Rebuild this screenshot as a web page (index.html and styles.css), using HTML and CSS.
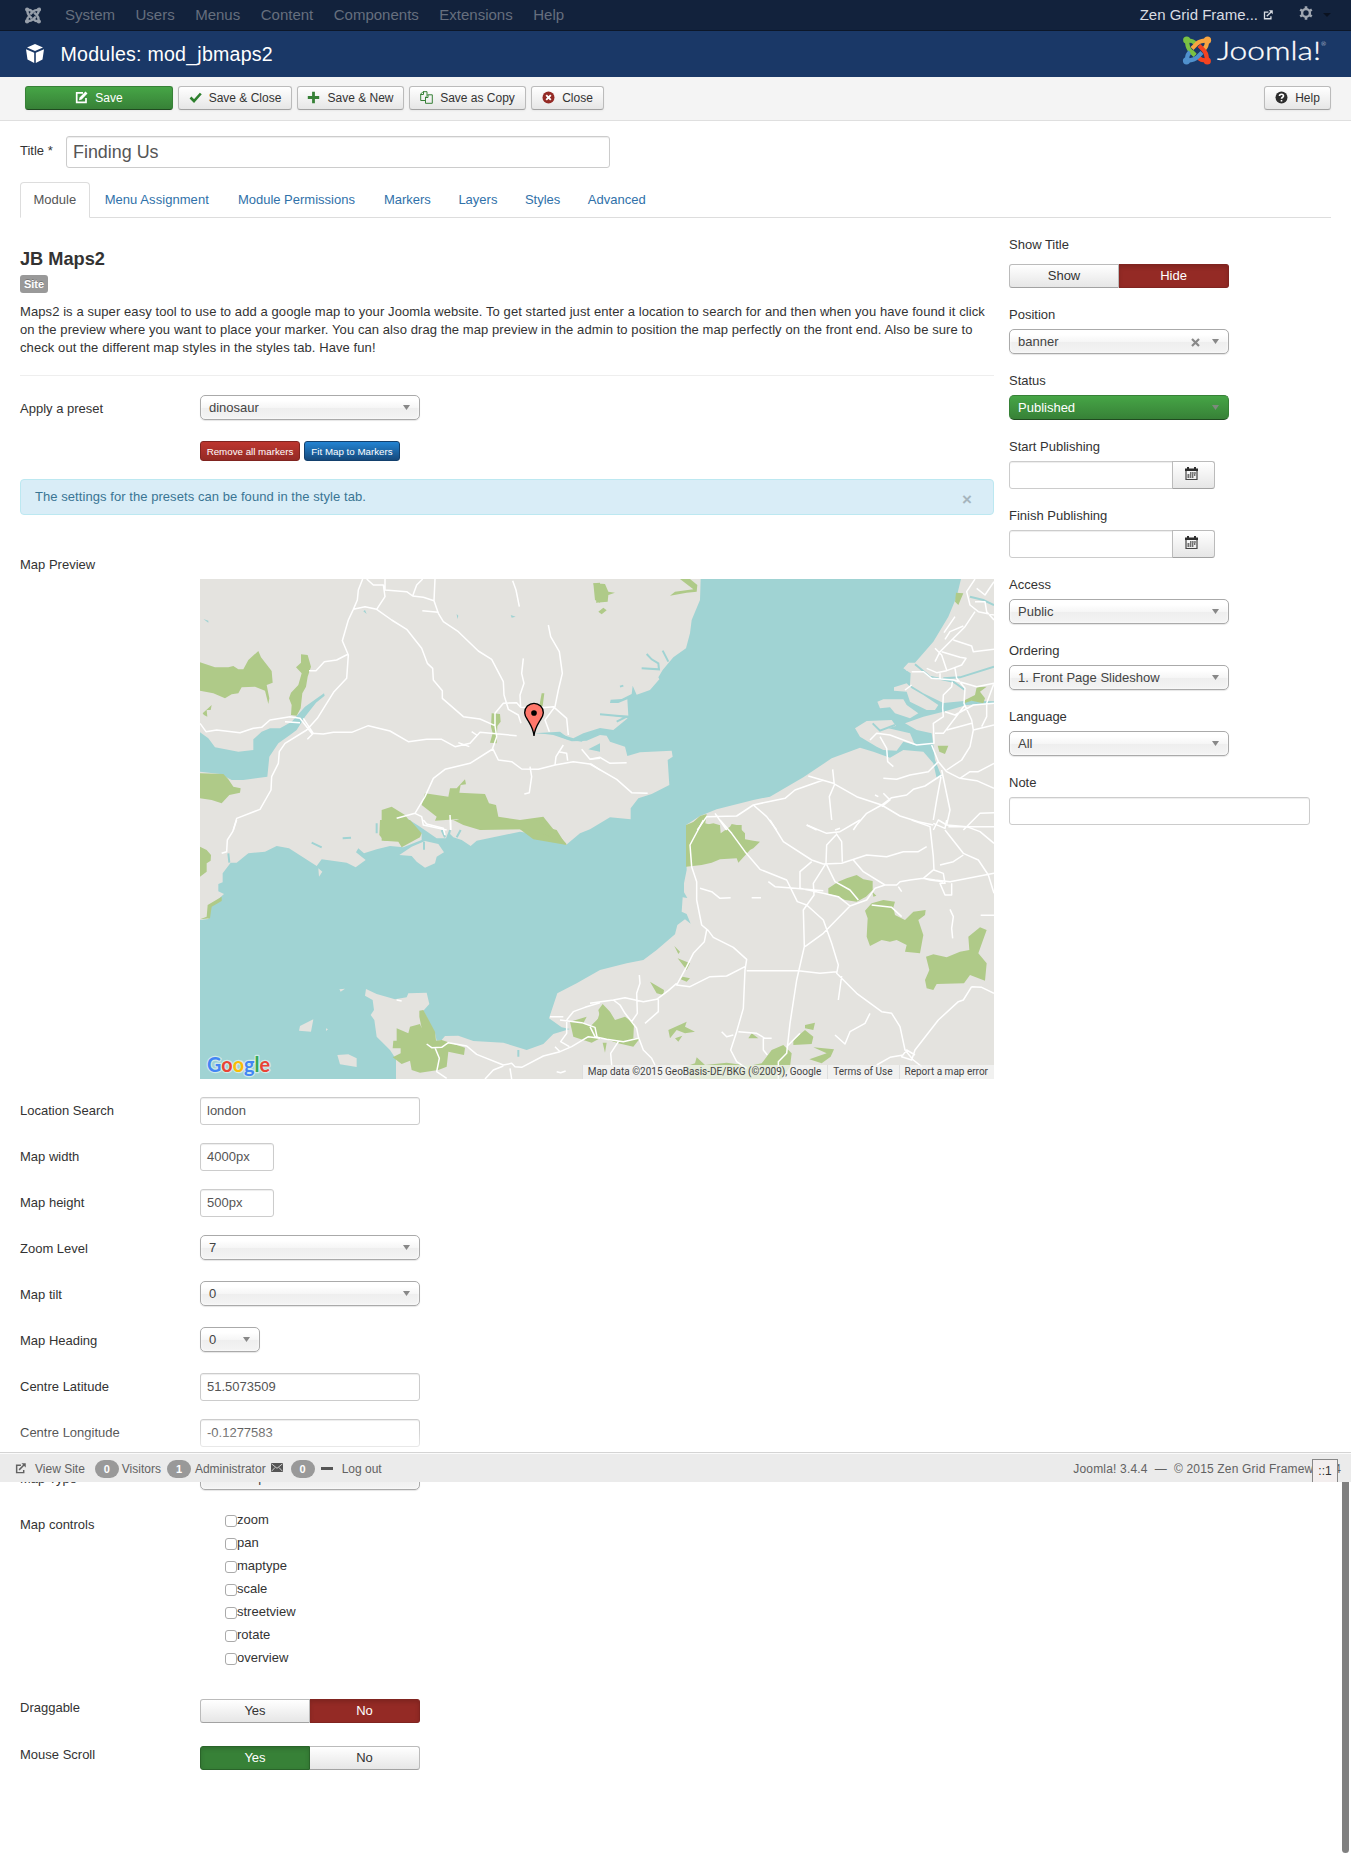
FILE: index.html
```html
<!DOCTYPE html>
<html lang="en">
<head>
<meta charset="utf-8">
<title>Modules: mod_jbmaps2</title>
<link rel="stylesheet" href="styles.css">
</head>
<body>
<svg class="defs" width="0" height="0" aria-hidden="true">
  <defs>
    <g id="arm" fill="none" stroke="currentColor" stroke-width="4.2"><circle cx="3.7" cy="4" r="3.6" fill="currentColor" stroke="none"/><path d="M4 5C4.5 10 4 11.5 7.5 15L12 19.5M5 4.5C9 4.5 11 5.500 12.500 7.500"/></g>
    <g id="ext" fill="none" stroke="currentColor" stroke-width="1.600"><path d="M6.500 2.500H1.800V10.500H9.500V7.500M4.500 7.500L10 2"/><path d="M7 0.300H11.700V5z" fill="currentColor" stroke="none"/></g>
    <g id="cal"><path d="M0 1.500H2V0H4V1.500H9V0H11V1.500H13V4H0z" fill="#2d2d2d"/><path d="M1 4V12.500H12V4" fill="none" stroke="#444" stroke-width="1.200"/><path d="M5 6h6M2.500 8h8.500M2.500 10h6.500" stroke="#444" stroke-width="1.400" stroke-dasharray="1.500 .6"/></g>
  </defs>
</svg>
<nav class="navbar">
  <svg class="nav-mark" viewBox="0 0 28 29"><use href="#arm"/><use href="#arm" transform="rotate(90 14 14.500)"/><use href="#arm" transform="rotate(180 14 14.500)"/><use href="#arm" transform="rotate(270 14 14.500)"/></svg>
  <ul class="menu"><li>System</li><li>Users</li><li>Menus</li><li>Content</li><li>Components</li><li>Extensions</li><li>Help</li></ul>
  <div class="nav-right"><span>Zen Grid Frame...</span><svg class="nav-ext" width="10" height="10" viewBox="0 0 12 12"><use href="#ext"/></svg>
    <svg class="gear" width="14" height="14" viewBox="0 0 14 14"><circle cx="7" cy="7" r="3.900" fill="none" stroke="#a0a7b1" stroke-width="2.400"/><path d="M7 .3V3M7 11v2.700M1.200 3.600l2.400 1.400M10.400 9l2.400 1.400M1.200 10.400L3.600 9M10.400 5l2.400-1.400" stroke="#a0a7b1" stroke-width="2.600"/></svg>
    <i class="caret"></i></div>
</nav>
<header class="header">
  <svg class="cube" width="18" height="19" viewBox="0 0 18 19"><path fill="#fff" d="M9 0L17 3.600 9 7 1 3.600zM0 5.200L8.200 8.700V19L1.500 15.500zM18 5.200L9.800 8.700V19L16.500 15.500z"/></svg>
  <h1>Modules: mod_jbmaps2</h1>
  <svg class="brand" width="145" height="34" viewBox="0 0 145 34"><g style="color:#7ac143"><use href="#arm"/></g><g style="color:#f9a541"><use href="#arm" transform="rotate(90 14 14.500)"/></g><g style="color:#f44321"><use href="#arm" transform="rotate(180 14 14.500)"/></g><g style="color:#5091cd"><use href="#arm" transform="rotate(270 14 14.500)"/></g><path d="M8.500 15.500L12 19" stroke="#7ac143" stroke-width="4.200"/><text x="34" y="24" textLength="104" lengthAdjust="spacingAndGlyphs">Joomla!</text><text class="reg" x="138" y="10">®</text></svg>
</header>
<div class="toolbar">
  <button class="btn save"><svg width="13" height="13" viewBox="0 0 13 13"><path d="M8 1.900H1.700V11.400H11V7" fill="none" stroke="#fff" stroke-width="1.700"/><path d="M4 9.300L4.600 6.500 10.500.5 12.500 2.500 6.700 8.500z" fill="#fff"/></svg>Save</button>
  <button class="btn w2"><svg width="13" height="13" viewBox="0 0 13 13"><path d="M1.500 6.500L5 10 11.800 2.500" fill="none" stroke="#2d7f2d" stroke-width="2.600"/></svg>Save &amp; Close</button>
  <button class="btn w3"><svg width="13" height="13" viewBox="0 0 13 13"><path d="M6.500 .8V12.200M.8 6.500H12.200" stroke="#378137" stroke-width="2.800"/></svg>Save &amp; New</button>
  <button class="btn w4"><svg width="13" height="13" viewBox="0 0 13 13"><path d="M5 9.500H.7V3L3 .7H7V4M3.500 .7V3.500H.7M5.500 6L7.800 3.800H12.300V12.300H5.500zM8 4V6.500H5.500" fill="none" stroke="#378137" stroke-width="1"/></svg>Save as Copy</button>
  <button class="btn w5"><svg width="13" height="13" viewBox="0 0 13 13"><circle cx="6.500" cy="6.500" r="6" fill="#942a25"/><path d="M4.200 4.200L8.800 8.800M8.800 4.200L4.200 8.800" stroke="#fff" stroke-width="1.900"/></svg>Close</button>
  <button class="btn help"><svg width="13" height="13" viewBox="0 0 13 13"><circle cx="6.500" cy="6.500" r="6" fill="#2d2d2d"/><path d="M4.500 5C4.500 2.700 8.500 2.700 8.500 5C8.500 6.300 6.500 6.200 6.500 7.800M6.500 9V10.600" fill="none" stroke="#fff" stroke-width="1.600"/></svg>Help</button>
</div>
<main>
  <div class="title-row"><label>Title *</label><div class="input title">Finding Us</div></div>
  <ul class="tabs"><li class="active">Module</li><li>Menu Assignment</li><li>Module Permissions</li><li>Markers</li><li>Layers</li><li>Styles</li><li>Advanced</li></ul>
  <div class="columns">
    <section class="left">
      <h3>JB Maps2</h3>
      <span class="label-site">Site</span>
      <p class="desc">Maps2 is a super easy tool to use to add a google map to your Joomla website. To get started just enter a location to search for and then when you have found it click<br>on the preview where you want to place your marker. You can also drag the map preview in the admin to position the map perfectly on the front end. Also be sure to<br>check out the different map styles in the styles tab. Have fun!</p>
      <hr>
      <div class="row"><label>Apply a preset</label><div class="select">dinosaur</div></div>
      <div class="minis"><button class="mini red">Remove all markers</button><button class="mini blue">Fit Map to Markers</button></div>
      <div class="alert"><span>The settings for the presets can be found in the style tab.</span><b>×</b></div>
      <div class="map-label">Map Preview</div>
      <div class="map">
        <svg class="map-art" viewBox="0 0 2382 1500" width="794" height="500">
          <rect width="2382" height="1500" fill="#e4e3df"/>
          <g class="water">
            <path d="M1502 0L1500 63 1475 123 1470 163 1458 208 1420 235 1388 273 1375 295 1378 301 1350 333 1310 347 1298 320 1295 345 1265 360 1232 362 1230 372 1255 372 1282 361 1285 410 1230 409 1283 418 1240 453 1200 447 1150 463 1120 478 1070 462 1010 462 1060 468 1115 487 1160 485 1200 468 1220 470 1230 488 1275 503 1282 531 1320 520 1415 515 1418 533 1403 543 1408 618 1355 645 1315 658 1292 688 1292 721 1230 715 1170 751 1140 763 1098 798 1050 773 960 758 830 785 812 801 785 783 760 775 745 760 738 778 710 778 660 743 620 718 665 763 665 783 610 805 570 801 530 811 492 823 475 808 468 820 497 843 467 865 440 851 365 841 350 861 267 808 230 801 195 818 145 823 110 851 92 851 68 883 68 910 55 915 55 937 72 945 30 983 25 1020 0 1023V1500H588L588 1441 570 1413 530 1373 523 1323 512 1308 522 1293 518 1263 495 1250 498 1230 530 1245 585 1261 620 1255 625 1243 680 1241 688 1275 670 1295 705 1363 710 1385 725 1383 735 1371 775 1370 820 1386 910 1391 980 1413 1030 1395 1060 1365 1110 1350 1085 1345 1047 1318 1072 1243 1130 1213 1200 1173 1280 1153 1330 1143 1370 1113 1425 1066 1432 1038 1455 1021 1472 1034 1460 1005 1445 998 1448 955 1462 957 1452 940 1452 913 1460 873 1458 738 1500 711 1550 691 1660 663 1710 653 1810 595 1895 538 1980 506 2020 518 2070 536 2110 513 2170 518 2200 553 2210 598 2225 593 2205 543 2200 498 2195 463 2150 453 2115 433 2170 413 2230 398 2300 378 2382 373V367L2300 365 2230 372 2170 343 2130 318 2132 283 2110 268 2125 251 2145 251 2200 188 2245 113 2270 53 2283 0z"/>
            <g transform="translate(-30 -27)"><path d="M30 487L55 505 75 532 145 545 190 540 190 508 215 485 240 475 270 475 305 455 345 410 385 382 402 370 404 377 378 398 345 440 320 480 300 495 265 520 238 560 232 620 160 630 125 630 90 612 30 605zM1030 490L1110 485 1140 508 1175 508 1190 492 1230 482V490L1195 500 1175 515 1130 508 1095 492zM1195 538L1230 520V545zM525 120l5 12-10-8zM40 147l15 5v6zM800 132l5 5-3 10zM962 135l15 5-12 3z"/></g>
          </g>
          <g transform="translate(1170 -27)">
            <path class="land" d="M795 475L830 453 905 450 918 468 895 475 960 490 975 525 940 515 920 542 880 540 860 530 840 518 810 500zM862 395L880 388 940 388 950 405 985 430 960 445 915 430 900 412 870 415zM912 352L950 340 965 355 1000 375 1045 405 1035 420 1010 420 960 395 950 365 912 362zM950 285L970 290 965 300 948 302z"/>
            <path class="stream" d="M975 283L1020 320 1090 335 1125 360M1060 325L1110 322 1212 290M1140 80L1180 90 1212 105M170 252L185 268 205 280 207 298 155 295M218 242L235 275M1010 490L1020 520M848 460L870 482 915 465M0 487L40 490M90 350l10-3M30 433L110 440 80 455"/>
          </g>
          <g transform="translate(-30 723)">
            <path class="land" d="M628 105L665 80 705 63 745 72 762 97 740 110 735 130 705 143 680 125 665 108zM385 145L397 155 387 170zM327 632L330 618 370 598 363 635zM442 705L475 703 500 715 500 741 450 733zM448 508L465 506 452 515zM408 625l6 3-6 5z"/>
            <path class="stream" d="M115 100L118 128M365 68L395 82M560 10v30M652 0L700 40M755 30L765 52M780 30L775 52M812 30L800 52M458 55l25-2M702 65v24M985 690v20"/>
          </g>
          <g class="green">
            <g transform="translate(-30 -27)"><path d="M30 277L75 292 115 292 130 288 145 298 160 298 175 270 205 243 213 262 245 303 248 338 230 345 238 385 235 402 225 362 195 350 155 352 145 370 125 373 105 385 70 370 30 362zM333 253L353 255 363 290 353 320 348 350 337 370 332 415 320 437 303 435 305 405 297 385 303 368 325 345 335 310 318 292 333 278zM38 430L65 405 62 420 50 420 52 440 42 435zM30 610L100 612 115 628 130 650 152 655 150 668 118 675 95 700 65 690 30 685zM905 430L930 432 932 455 922 468 920 520 900 518 908 490 903 470zM1055 370h8l-5 38h-10zM1210 40L1230 38V98L1215 90zM695 705L705 670 775 680 780 655 800 655 825 628 828 643 812 645 808 668 885 672 897 700 918 705 925 740 990 750 1060 740 1090 778 1128 820 1130 825 1030 808 980 770 880 770 800 748 735 752 740 740zM575 720L605 710 645 735 690 795 650 812 575 812z"/></g>
            <g transform="translate(1170 -27)"><path d="M10 40L45 42 55 65 75 68 55 75 53 95 18 98 22 75zM25 125l15-12 10 8-15 12zM270 27H300L322 45 320 65 290 68 240 77 255 65 310 58zM1098 68L1120 70 1105 105 1095 95zM1125 390L1155 375 1160 352 1190 350 1170 365 1185 385 1180 400 1145 392 1122 400zM1043 527H1075L1065 552 1048 545zM288 765L300 765 330 738 350 732 345 765 370 760 388 765 385 800 288 800zM425 765h30v25h-35z"/></g>
            <g transform="translate(-30 723)"><path d="M30 80L50 90 63 105 62 122 50 130 50 155 30 170zM95 230V243L65 260 60 295 30 298 50 290 53 255zM570 0H660L695 40 690 52 635 82 625 65 582 62 568 45zM790 0H1040L1065 20 1100 30 1128 75 1070 45 1010 28 870 30 820 15zM688 572L700 570 735 635 738 662 755 660 825 683 822 705 775 695 770 740 745 750 690 758 665 750 660 722 635 732 608 712 632 700 632 685 608 685 610 662 620 662 620 625 655 640 660 620 690 612 695 625 688 590zM1140 605L1190 590 1180 610 1215 625 1230 575V655L1205 668 1150 650z"/></g>
            <g transform="translate(1170 723)"><path d="M288 15L325 0 345 10 365 15 390 15 392 40 420 20 425 12 440 15 465 40 465 58 490 62 510 65 490 85 480 90 445 128 440 115 390 118 365 128 335 135 288 140zM715 205L745 185 770 175 800 165 820 178 848 183 848 210 828 230 800 245 765 240 740 228 715 222zM850 230l-3-15 12 12zM845 250L880 240 915 245 910 262 915 285 945 300 970 275 1007 270 1005 285 985 300 1000 345 990 400 945 395 950 375 920 360 900 365 875 360 840 378 830 350 833 295 825 272zM1008 410L1030 403 1070 412 1110 395 1138 390 1135 350 1170 322 1190 330 1165 400 1190 430 1185 482 1140 465 1122 490 1040 492 1030 510 1010 505 1005 480 1018 450zM253 378L270 395 265 402zM263 415L300 430 290 450zM278 470L300 475 290 485 272 478zM180 485L222 510 220 525 200 520zM0 620L30 590 25 570 38 552 60 575 75 600 105 590 132 610 130 655 150 655 130 680 85 670 40 655 0 660zM38 668h12l-5 30zM235 630L290 605 285 620 315 635 285 640 260 630 240 655zM255 655l22-8-12 18zM475 655l10-15 20 15zM610 660L645 630 670 650 665 672 610 675zM645 615L675 608 670 630 645 625zM658 718L710 700 670 682 732 688 722 710 695 730zM285 740L315 730 320 712 345 735 410 728 460 735 490 735 515 730 545 690 580 675 605 700 600 740 575 777H300z"/></g>
          </g>
          <g class="roads">
            <g transform="translate(-30 -27)"><path d="M518 27L505 60 502 90 490 118 475 150 457 212 475 255 470 325 432 365 382 445 350 480 285 520 268 545 265 580 245 620 243 660 210 718 140 745 130 780M490 118L525 110 560 118 605 150 650 178 695 235 712 280 728 295 730 330 757 362 757 385 820 440 870 447 915 467M530 27L550 45 580 45 585 80 560 118M585 27V60L650 65 668 78 700 82 732 92 735 27M668 78L680 45 698 27M732 92L745 130 760 155 805 185 865 243 905 268 940 335 942 375 955 418 985 435 993 460M697 122L745 127M968 32L978 60 988 110M1075 165L1082 200 1108 245 1117 310 1105 360 1095 410 1065 450 1078 485M1000 265L995 310 1002 340 990 375 992 412 1040 415 1090 410 1130 445 1135 495M992 412L980 398 940 400 915 430 915 467 920 500 908 535 925 570 965 575 995 597 1045 598 1095 585 1150 575 1205 583 1230 600M980 497L870 487 840 520 795 530 755 508 710 508 655 515 600 483 535 467 485 487 430 487 400 492 365 490 330 445 300 440 240 450 215 472 190 475 150 488 125 485 80 480 48 485 30 460M285 455L330 458M340 445L370 490 352 508M475 252L440 270 403 275 378 302 357 302M908 537L840 580 765 598 730 625 705 680 675 730 620 745M675 730L695 740 700 765 770 780M780 735L782 780M1020 590L1025 620 1018 668 1003 672M1095 585L1098 560 1120 525M1105 545L1130 550 1133 572M1175 538L1200 568 1230 565M805 518L838 530M845 485L860 495"/></g>
            <g transform="translate(1170 -27)"><path d="M0 568L30 562 60 580 110 578M0 582L80 628 125 668 173 670M1155 27L1130 65 1140 105 1165 125 1212 135M1160 55L1185 75 1212 35M1155 95L1185 95 1190 125 1212 150M1155 125L1125 170 1050 245 1035 275M1065 208L1080 185 1120 168M1095 140L1062 188M1090 210L1145 228 1150 245 1212 238M1035 235L1055 255 1070 300M1055 245L1110 262 1128 265 1115 285 1070 302 1040 308 1010 295M965 305L1000 305 1025 325 1090 330 1160 350 1212 340M1050 310v18M1095 295L1100 325 1125 355 1122 400 1145 450 1150 480 1140 530 1115 570 1070 600M1087 335L1085 350 1060 375 1058 415 1060 440 1030 460 1032 520 980 525 940 510 900 495 860 490 840 510M870 500L890 535 893 575 910 590M1212 400L1150 405 1095 435 1065 425M1125 405L1060 490 1035 490M1070 480L1115 468 1145 460M1150 480L1212 465M1212 340L1190 400 1190 440 1175 470M1025 525L1045 575 1070 605 1110 625 1160 632 1212 655M1045 575L1015 605 960 615 920 628 880 625M1055 600L1080 720 1070 765 1045 750 1030 780M1053 620L1040 690 1030 750M1055 615L1005 648 970 658 950 675 905 683 875 705 830 730 800 765 790 780M1110 625L1140 605 1165 605 1212 580M655 618L730 640 800 680 875 705 930 738 985 755 1030 765M728 598L733 645 718 680 725 750M700 630L615 660 585 685 535 695 490 705 440 738 350 740 322 780M490 705L530 740 560 780M375 730L410 780M865 680L855 675M880 670L900 690 875 710M965 345L945 360M1120 780L1170 730 1212 728M1070 765L1130 770 1212 770M650 765L680 780M735 780l15-5"/></g>
            <g transform="translate(-30 723)"><path d="M140 0L128 35 112 60 110 95 95 100M700 0L710 12 760 25 765 45M782 0V30M710 672L725 683 755 682 775 668 830 678 860 703 940 735 965 730 975 740 995 742 1060 708 1110 695 1145 680 1195 650 1230 655M735 683L748 715 740 755 770 775M940 738L910 750 885 777M960 745L965 777M1080 590L1120 590M1110 600L1175 608 1215 622 1222 655M1130 600V640L1112 665 1138 680M1130 600L1150 575 1185 562 1230 548M1095 680L1110 695M620 540l15 3M1100 755l12 3 15-5"/></g>
            <g transform="translate(1170 723)"><path d="M340 0L300 75 305 140 320 185 320 240 335 315 355 332 370 352 430 382 470 418 465 450 460 565 440 635 422 690 440 725 470 745M390 0L425 40 465 95 510 148 590 180 622 245 650 255 700 300 725 370 745 435 740 460 800 520 875 575 905 580 930 620 945 690 970 720 995 740M540 0L580 65 665 120 700 132 755 130 830 105 890 110 940 95 985 95 1010 80M650 15L710 40 750 35 810 0M738 40L755 65 757 125M738 45L710 75 708 130 670 190 672 225 640 270 643 380 620 480 600 610 590 700 565 725 565 777M665 125L630 155 630 205 700 220 745 230 780 258 830 240 855 205 885 195 920 195 930 185 960 180 1000 175 1035 180 1080 185 1212 160M535 185L555 200 615 205 700 212M708 130L735 185 780 210 805 240M790 120L820 155 885 195M965 0L1020 20 1030 110 1032 150 1060 160 1065 190 1050 190 1065 225 1085 225V190M1070 0L1065 25 1030 10M1075 20L1130 20 1170 35 1212 70M1065 30L1120 100 1165 120 1195 165 1212 220M1120 105L1090 125 1050 135M1032 148L1000 175 1020 180 1060 185M780 258L700 340 645 380M350 330L343 365 310 400 290 440 260 495 300 500 360 470 410 468 465 440M260 490L235 512 200 538 160 545 105 533 70 540 0 550M470 452L625 452 690 460 740 455M70 540L90 555 105 580 140 625 145 650 160 690 185 715 195 735M0 620L15 650 50 658 100 665 145 655M205 538V575L165 610M148 465L150 490 140 520 142 580 125 605M755 468L745 540M590 680L630 640M445 635L500 640 525 655 545 655M520 655V690L532 705M395 635L410 650 430 645M840 580L825 610 780 635 765 672 735 645M1145 500L1120 540 1105 545 1045 600 975 690 965 720 935 710 950 690 975 705M940 705L900 712 860 735M1145 500L1175 502 1212 520M85 665L62 700 65 735M330 205L365 215 390 235 422 233M485 233h28M1080 268L1090 290 1085 325 1088 355M1172 286h40M925 200L935 215M845 255L905 262 935 290"/></g>
          </g>
          <g transform="translate(-30 -27)"><path d="M1032 498C1030 475 1022 465 1013 450C1006 440 1004 436 1004 428A28 28 0 0 1 1060 428C1060 436 1058 440 1051 450C1042 465 1034 475 1032 498z" fill="#ff776b" stroke="#000" stroke-width="4"/><circle cx="1032" cy="429" r="8.500"/></g>
        </svg>
        <svg class="google" width="72" height="30" viewBox="0 0 72 30"><text x="4" y="23" textLength="63" lengthAdjust="spacingAndGlyphs"><tspan fill="#4285f4">G</tspan><tspan fill="#ea4335">o</tspan><tspan fill="#fbbc05">o</tspan><tspan fill="#4285f4">g</tspan><tspan fill="#34a853">l</tspan><tspan fill="#ea4335">e</tspan></text></svg>
        <div class="credits"><span>Map data ©2015 GeoBasis-DE/BKG (©2009), Google</span><span>Terms of Use</span><span>Report a map error</span></div>
      </div>
      <div class="row"><label>Location Search</label><div class="input wide">london</div></div>
      <div class="row"><label>Map width</label><div class="input small">4000px</div></div>
      <div class="row"><label>Map height</label><div class="input small">500px</div></div>
      <div class="row"><label>Zoom Level</label><div class="select">7</div></div>
      <div class="row"><label>Map tilt</label><div class="select">0</div></div>
      <div class="row"><label>Map Heading</label><div class="select tiny">0</div></div>
      <div class="row"><label>Centre Latitude</label><div class="input wide">51.5073509</div></div>
      <div class="row"><label>Centre Longitude</label><div class="input wide">-0.1277583</div></div>
      <div class="row"><label>Map Type</label><div class="select">Roadmap</div></div>
      <div class="row controls"><label>Map controls</label><div class="checks"><span><i></i>zoom</span><span><i></i>pan</span><span><i></i>maptype</span><span><i></i>scale</span><span><i></i>streetview</span><span><i></i>rotate</span><span><i></i>overview</span></div></div>
      <div class="row radio"><label>Draggable</label><div class="switch"><span>Yes</span><span class="no">No</span></div></div>
      <div class="row radio"><label>Mouse Scroll</label><div class="switch"><span class="yes">Yes</span><span>No</span></div></div>
    </section>
    <aside class="right">
      <label>Show Title</label><div class="switch top"><span>Show</span><span class="no">Hide</span></div>
      <label>Position</label><div class="select clearable">banner<svg width="9" height="9" viewBox="0 0 9 9"><path d="M1 1L8 8M8 1L1 8" stroke="#888" stroke-width="2.200"/></svg></div>
      <label>Status</label><div class="select published">Published</div>
      <label>Start Publishing</label><div class="date"><div class="input"></div><button><svg width="13" height="13" viewBox="0 0 13 13"><use href="#cal"/></svg></button></div>
      <label>Finish Publishing</label><div class="date"><div class="input"></div><button><svg width="13" height="13" viewBox="0 0 13 13"><use href="#cal"/></svg></button></div>
      <label>Access</label><div class="select">Public</div>
      <label>Ordering</label><div class="select">1. Front Page Slideshow</div>
      <label>Language</label><div class="select">All</div>
      <label>Note</label><div class="input note"></div>
    </aside>
  </div>
</main>
<footer class="status">
  <svg width="11" height="11" viewBox="0 0 12 12"><use href="#ext"/></svg><span class="view">View Site</span>
  <b class="badge">0</b><span class="vis">Visitors</span><b class="badge">1</b><span class="adm">Administrator</span>
  <svg class="mail" width="12" height="9" viewBox="0 0 12 9"><path fill="#555" d="M0 0H12V9H0z"/><path d="M.5 .8L6 5.300 11.500 .8M.5 8.300L4 4.500M11.500 8.300L8 4.500" fill="none" stroke="#ebebeb" stroke-width=".8"/></svg>
  <b class="badge">0</b><i class="dash"></i><span>Log out</span>
  <span class="copy">Joomla! 3.4.4 &nbsp;—&nbsp; © 2015 Zen Grid Framework 4</span>
  <span class="ip">::1</span>
</footer>
<div class="scrollbar"></div>
</body>
</html>
```
FILE: styles.css
```css
* { box-sizing: border-box; }
body { margin: 0; width: 1351px; height: 1856px; overflow: hidden; position: relative; background: #fff; color: #333; font: 13px/18px "Liberation Sans", Arial, sans-serif; }
ul { list-style: none; margin: 0; padding: 0; }
button { font: inherit; color: inherit; margin: 0; }
.defs { position: absolute; }
svg { display: block; flex: none; }

.navbar { height: 31px; background: #12223c; border-bottom: 1px solid #0c1729; display: flex; align-items: center; font-size: 15px; color: #666f7e; padding-left: 25px; }
.nav-mark { width: 16px; height: 17px; color: #98a0ab; }
.menu { display: flex; gap: 20.500px; margin-left: 24px; }
.nav-right { margin-left: auto; display: flex; align-items: center; color: #d9dde3; padding-right: 20px; }
.nav-ext { margin-left: 5px; }
.gear { margin: -4px 0 0 26px; }
.caret { margin-left: 10px; border: 4px solid transparent; border-top-color: #0a1220; border-bottom: 0; }

.header { height: 46px; background: #1a3867; display: flex; align-items: center; padding-left: 26px; color: #fff; }
.cube { margin-top: -2px; }
.header h1 { font-size: 19.600px; letter-spacing: .22px; font-weight: 400; line-height: 30px; margin: 0 0 0 16.500px; }
.brand { align-self: flex-start; margin: 5px 23px 0 auto; font: 300 25px Lato, sans-serif; fill: #fff; stroke-width: .3px; overflow: visible; }
.brand text { stroke: #fff; }
.brand .reg { font-size: 6px; stroke: none; }

.toolbar { height: 44px; background: #f4f4f4; border-bottom: 1px solid #dfdfdf; display: flex; gap: 5px; padding: 9px 20px 0 25px; }
.btn { height: 24px; padding: 0 0 1px; display: flex; align-items: center; justify-content: center; gap: 7px; border: 1px solid #bbb; border-bottom-color: #a2a2a2; border-radius: 3px; background: linear-gradient(#fff, #e6e6e6); font-size: 12px; box-shadow: 0 1px 2px rgba(0,0,0,.05); }
.btn svg { margin-top: -1px; }
.save { width: 148px; color: #fff; background: linear-gradient(#46a546, #378137); border-color: #378137 #378137 #204b20; }
.w2 { width: 114px; }
.w3 { width: 107px; }
.w4 { width: 117px; }
.w5 { width: 73px; }
.help { width: 67px; margin-left: auto; }

main { padding: 15px 20px 0; }
.title-row { display: flex; height: 32px; }
.title-row label { width: 46px; padding-top: 6px; }
.input { height: 28px; border: 1px solid #ccc; border-radius: 3px; box-shadow: inset 0 1px 1px rgba(0,0,0,.075); padding: 4px 6px; color: #555; background: #fff; }
.input.title { width: 544px; height: 32px; font-size: 17.900px; padding: 5px 6px; line-height: 21px; }
.tabs { display: flex; margin-top: 14px; height: 36px; border-bottom: 1px solid #ddd; color: #3071a9; }
.tabs li { height: 36px; padding: 8px 13px; border: 1px solid transparent; margin-right: 1px; }
.tabs li:nth-child(n+4) { margin-right: -.5px; }
.tabs li:nth-child(2) { letter-spacing: .06px; }
.tabs .active { color: #555; border-color: #ddd #ddd #fff; border-radius: 4px 4px 0 0; background: #fff; padding: 8px 12.500px; }

.columns { display: flex; gap: 15px; }
.left { width: 974px; padding-top: 29px; }
h3 { margin: 0; height: 28px; font-size: 18.200px; line-height: 24px; }
.label-site { display: block; width: 28px; height: 18px; background: #999; color: #fff; border-radius: 3px; font: bold 11px/18px "Liberation Sans", Arial, sans-serif; text-align: center; text-shadow: 0 -1px 0 rgba(0,0,0,.25); }
.desc { margin: 10px 0 18px; white-space: nowrap; letter-spacing: .085px; }
hr { margin: 0 0 19px; border: 0; border-top: 1px solid #eee; height: 1px; }
.row { display: flex; height: 28px; margin-bottom: 18px; }
.row > label { width: 180px; padding-top: 5px; }
.select { position: relative; width: 220px; height: 25px; border: 1px solid #aaa; border-radius: 5px; padding: 0 8px; line-height: 24px; color: #444; background: linear-gradient(#fff 20%, #f6f6f6 50%, #eee 52%, #f4f4f4); box-shadow: inset 0 0 3px #fff, 0 1px 1px rgba(0,0,0,.1); }
.select::after { content: ""; position: absolute; right: 9px; top: 9px; width: 7px; height: 5px; background: #888; clip-path: polygon(0 0, 100% 0, 50% 100%); }
.tiny { width: 60px; }
.wide { width: 220px; }
.small { width: 74px; }
.minis { display: flex; gap: 4px; padding-left: 180px; }
.mini { height: 20px; padding: 0; border-radius: 3px; color: #fff; font-size: 9.750px; line-height: 17px; }
.red { width: 100px; background: linear-gradient(#bd362f, #942a25); border: 1px solid #802420; }
.blue { width: 96px; background: linear-gradient(#2384d3, #15497c); border: 1px solid #13406d; }
.alert { margin-top: 18px; height: 36px; border: 1px solid #bce8f1; border-radius: 4px; background: #d9edf7; color: #3a7594; display: flex; justify-content: space-between; padding: 8px 21px 0 14px; letter-spacing: .06px; }
.alert b { font-size: 17px; line-height: 24px; color: #a6b5bd; }
.map-label { margin: 41px 0 5px; }
.map { position: relative; width: 794px; height: 500px; margin: 0 0 18px 180px; overflow: hidden; }
.water { fill: #a0d3d3; }
.land { fill: #e4e3df; }
.stream { fill: none; stroke: #a0d3d3; stroke-width: 6; }
.green { fill: #afca88; }
.roads { fill: none; stroke: #fff; stroke-width: 4.500; stroke-linejoin: round; }
.google { position: absolute; left: 3px; bottom: 0; font: 700 21px Lato, sans-serif; paint-order: stroke; stroke: rgba(255,255,255,.5); stroke-width: 2.500px; stroke-linejoin: round; }
.credits { position: absolute; right: 0; bottom: 0; height: 14px; display: flex; font: 10px/14px Roboto, sans-serif; color: #444; background: rgba(245,245,245,.75); white-space: nowrap; }
.credits span { padding: 0 6px 0 5px; border-left: 1px solid #dedede; }
.row.controls { height: 165px; }
.checks { padding-left: 25px; }
.checks span { display: flex; align-items: center; height: 18px; margin-bottom: 5px; }
.checks i { width: 12px; height: 12px; margin-top: 2px; border: 1px solid #aaa; border-radius: 3px; background: #fff; }
.row.radio { height: 29px; padding-top: 5px; }
.radio > label { padding-top: 0; }
.switch { display: flex; width: 220px; height: 24px; text-align: center; line-height: 22px; }
.switch span { width: 110px; border: 1px solid #bbb; border-bottom-color: #a2a2a2; background: linear-gradient(#fff, #e6e6e6); border-radius: 3px 0 0 3px; }
.switch span + span { border-left: 0; border-radius: 0 3px 3px 0; }
.switch .no { background: #942a25; border-color: #802420; color: #fff; box-shadow: inset 0 2px 4px rgba(0,0,0,.15); }
.switch .yes { background: #378137; border-color: #2a642a; color: #fff; box-shadow: inset 0 2px 4px rgba(0,0,0,.15); }

.right { width: 322px; padding-top: 18px; }
.right label { display: block; margin-bottom: 5px; }
.right > div { margin-bottom: 18px; }
.right .top { margin-top: 10px; }
.clearable svg { position: absolute; right: 28px; top: 8px; }
.published { color: #fff; background: linear-gradient(#46a546, #378137); border-color: #378137 #378137 #204b20; box-shadow: none; }
.published::after { background: #7d8a7d; }
.date { display: flex; }
.date .input { width: 164px; border-radius: 3px 0 0 3px; }
.date button { width: 43px; height: 28px; margin-left: -1px; padding: 0 0 3px 12px; border: 1px solid #bbb; border-bottom-color: #a2a2a2; border-radius: 0 3px 3px 0; background: linear-gradient(#fff, #e6e6e6); }
.note { width: 301px; }

.status { position: absolute; left: 0; top: 1452px; width: 1351px; height: 30px; display: flex; align-items: center; padding: 2px 0 0 15px; background: #ebebeb; border-top: 1px solid #d4d4d4; box-shadow: inset 0 1px 0 rgba(255,255,255,.8), 0 -15px 15px rgba(255,255,255,.6); color: #626262; font-size: 12px; overflow: hidden; clip-path: inset(-40px 0 0); }
.view { margin: 0 10px 0 9px; }
.badge { width: 24px; height: 18px; border-radius: 9px; background: #999; color: #fff; font-size: 11px; line-height: 18px; text-align: center; }
.vis { margin: 0 6px 0 3px; }
.adm { margin: 0 5px 0 4px; }
.mail { margin: -2px 8px 0 0; }
.dash { width: 12px; height: 3px; margin: -1px 9px 0 6px; background: #555; }
.copy { margin: 0 10px 0 auto; letter-spacing: .18px; }
.ip { position: absolute; left: 1312px; top: 6px; width: 26px; height: 26px; border: 1px solid #888; background: #f3eeee; color: #333; text-align: center; line-height: 22px; }
.scrollbar { position: absolute; left: 1342px; top: 1482px; width: 7px; height: 371px; background: #808080; border-radius: 0 0 4px 4px; }
```
